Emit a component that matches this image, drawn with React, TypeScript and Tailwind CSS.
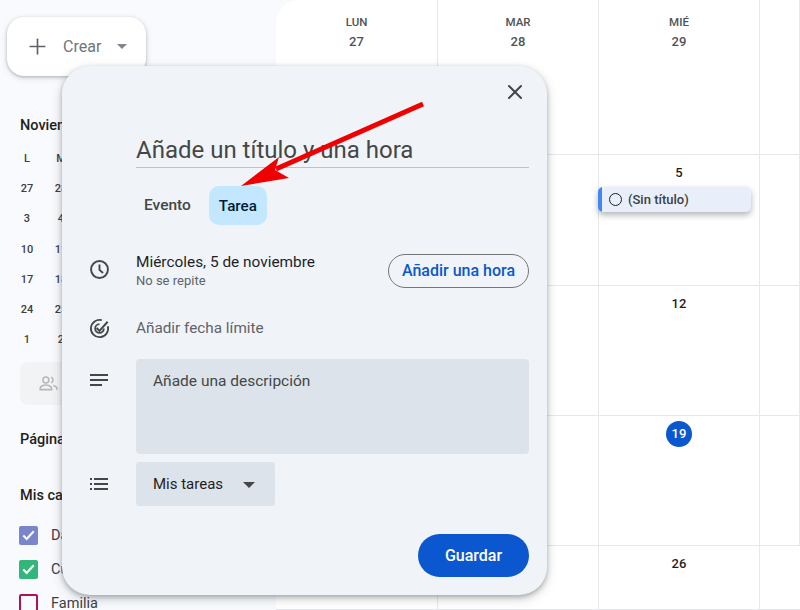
import React from "react";
import { X, Plus } from "lucide-react";

const miniRows = [
  ["27", "28"],
  ["3", "4"],
  ["10", "11"],
  ["17", "18"],
  ["24", "25"],
  ["1", "2"],
];

const Check = () => (
  <svg viewBox="0 0 20 20" className="h-5 w-5" fill="none">
    <path d="M4.5 10.5l3.6 3.6 7.4-8" stroke="#fff" strokeWidth="2.2" />
  </svg>
);

const Sidebar = () => (
  <aside className="flex h-[610px] w-[276px] shrink-0 flex-col overflow-hidden pt-[17px]">
    <div className="ml-[7px] flex h-[59px] w-[139px] shrink-0 items-center rounded-[17px] bg-white pl-[18px] shadow-[0_1px_3px_rgba(60,64,67,0.3),0_2px_6px_rgba(60,64,67,0.15)]">
      <Plus size={25} strokeWidth={1.6} className="text-[#5f6368]" />
      <span className="ml-[13px] text-[16px] text-[#70757a]">Crear</span>
      <span className="ml-[16px] h-0 w-0 border-x-[5px] border-t-[5px] border-x-transparent border-t-[#80868b]" />
    </div>
    <div className="ml-5 mt-[40px] shrink-0 text-[14.5px] font-medium leading-5 text-[#1f1f1f]">Noviembre</div>
    <div className="mt-[15px] ml-[10px] grid w-[68px] shrink-0 grid-cols-2 text-center text-[11px] font-medium leading-[30.3px] text-[#3c4043]">
      <span className="leading-4">L</span>
      <span className="leading-4">M</span>
      <div className="col-span-2 h-[7px]" />
      {miniRows.flat().map((d, i) => (
        <span key={i}>{d}</span>
      ))}
    </div>
    <div className="ml-5 mt-[6px] flex h-[43px] w-[120px] shrink-0 items-center rounded-lg bg-[#f1f3f4] pl-[18px]">
      <svg viewBox="0 0 24 24" className="h-[21px] w-[21px]" fill="none" stroke="#b5b9be" strokeWidth="1.8">
        <circle cx="9" cy="8" r="3.4" />
        <path d="M2.5 19v-1.5c0-2.3 3.6-3.7 6.5-3.7s6.5 1.4 6.5 3.7V19z" />
        <path d="M15 4.8a3.4 3.4 0 010 6.4M17.5 14.2c2.2.6 4 1.7 4 3.3V19" />
      </svg>
    </div>
    <div className="ml-5 mt-[25px] shrink-0 text-[14.5px] font-medium leading-5 text-[#1f1f1f]">Páginas</div>
    <div className="ml-5 mt-[36px] shrink-0 text-[14.5px] font-medium leading-5 text-[#1f1f1f]">Mis calendarios</div>
    <div className="ml-[19px] mt-[20px] flex shrink-0 flex-col gap-[15px]">
      <div className="flex items-center gap-[13px]">
        <span className="flex h-[19px] w-[19px] items-center justify-center rounded-[2px] bg-[#7986cb]"><Check /></span>
        <span className="text-[14.5px] leading-[19px] text-[#3c4043]">Daniel</span>
      </div>
      <div className="flex items-center gap-[13px]">
        <span className="flex h-[19px] w-[19px] items-center justify-center rounded-[2px] bg-[#33b679]"><Check /></span>
        <span className="text-[14.5px] leading-[19px] text-[#3c4043]">Cumpleaños</span>
      </div>
      <div className="flex items-center gap-[13px]">
        <span className="h-[19px] w-[19px] rounded-[2px] border-2 border-[#ad1457]" />
        <span className="text-[14.5px] leading-[19px] text-[#3c4043]">Familia</span>
      </div>
    </div>
  </aside>
);

const Calendar = () => (
  <main className="h-[610px] flex-1 overflow-hidden rounded-tl-[24px] bg-white">
    <div className="grid grid-cols-[162px_161px_161px_40px] grid-rows-[155px_131px_130px_130px_64px]">
      {["LUN|27", "MAR|28", "MIÉ|29", "", "", "", "5", "", "", "", "12", "", "", "", "19", "", "", "", "26", ""].map((c, i) => {
        const [dow, num] = c.includes("|") ? c.split("|") : ["", c];
        return (
          <div key={i} className="relative flex flex-col items-center border-b border-r border-[#e6e8ec] last:border-r-0">
            {dow && (
              <>
                <span className="mt-[14px] text-[11.5px] font-medium leading-4 text-[#4f5357]">{dow}</span>
                <span className="mt-[3px] text-[13px] font-medium leading-[18px] text-[#4f5357]">{num}</span>
              </>
            )}
            {!dow && num === "19" && (
              <span className="mt-[5px] flex h-[26px] w-[26px] items-center justify-center rounded-full bg-[#0b57d0] text-[13px] font-medium text-white">19</span>
            )}
            {!dow && num && num !== "19" && (
              <span className="mt-[9px] text-[13px] font-medium leading-[18px] text-[#1f1f1f]">{num}</span>
            )}
            {num === "5" && (
              <div className="absolute left-[-1px] top-[32px] flex h-[25px] w-[153px] items-center overflow-hidden rounded-[5px] bg-[#e8effa] shadow-[0_3px_6px_rgba(60,64,67,0.4)]">
                <span className="h-full w-[4px] bg-[#4285f4]" />
                <span className="ml-[7px] h-[13px] w-[13px] rounded-full border-[1.5px] border-[#1f1f1f]" />
                <span className="ml-[6px] text-[13px] font-medium text-[#3c4043]">(Sin título)</span>
              </div>
            )}
          </div>
        );
      })}
    </div>
  </main>
);

const Modal = () => (
  <div className="absolute left-[62px] top-[66px] flex h-[529px] w-[485px] flex-col rounded-[28px] bg-[#f0f4f9] pr-[18px] shadow-[0_2px_5px_rgba(60,64,67,0.35),0_4px_12px_rgba(60,64,67,0.2)]">
    <div className="flex justify-end pt-[14px] pr-[2px]">
      <X size={24} strokeWidth={2} className="text-[#444746]" />
    </div>
    <div className="ml-[74px] mt-[30px] border-b border-[#bfc3c7] text-[24px] leading-[33px] text-[#444746]">
      Añade un título y una hora
    </div>
    <div className="ml-[74px] mt-[18px] flex h-[39px]">
      <span className="flex items-center pl-2 pr-[18px] pt-[1px] text-[15.5px] font-medium text-[#444746]">Evento</span>
      <span className="flex items-center rounded-[10px] bg-[#c2e7ff] px-[10px] pt-[1px] text-[15.2px] font-medium text-[#001d35]">Tarea</span>
    </div>
    <div className="mt-[28px] flex h-[36px] items-center">
      <div className="mb-[3px] flex w-[74px] justify-center">
        <svg viewBox="0 0 24 24" className="h-[23px] w-[23px]" fill="none" stroke="#444746" strokeWidth="2">
          <circle cx="12" cy="12" r="8.8" />
          <path d="M12 6.8V12.4l3.7 3.2" />
        </svg>
      </div>
      <div className="flex-1">
        <div className="text-[15.4px] leading-[19px] text-[#1f1f1f]">Miércoles, 5 de noviembre</div>
        <div className="text-[13px] leading-[17px] text-[#5f6368]">No se repite</div>
      </div>
      <span className="flex h-[34px] w-[141px] items-center justify-center rounded-full border border-[#747775] text-[16px] font-medium text-[#0b57d0]">
        Añadir una hora
      </span>
    </div>
    <div className="mt-[21px] flex h-[36px] items-center">
      <div className="flex w-[74px] justify-center">
        <svg viewBox="0 0 24 24" className="h-[23px] w-[23px]" fill="none" stroke="#444746" strokeWidth="1.9">
          <path d="M20.7 9.6A9 9 0 1114.4 3.3" />
          <path d="M16.5 12a4.5 4.5 0 11-4.5-4.5" />
          <path d="M9 11.5l3 3 8.5-9.5" strokeWidth="2.1" />
        </svg>
      </div>
      <span className="text-[15.3px] text-[#5f6368]">Añadir fecha límite</span>
    </div>
    <div className="mt-[13px] flex">
      <div className="flex w-[74px] justify-center pt-[15px]">
        <svg viewBox="0 0 18 14" className="h-[14px] w-[18px]" fill="#444746">
          <rect width="18" height="2" y="0" />
          <rect width="18" height="2" y="5" />
          <rect width="12" height="2" y="10" />
        </svg>
      </div>
      <div className="h-[95px] flex-1 rounded-[4px] bg-[#dde3ea] px-[17px] pt-[12px] text-[15.5px] leading-[20px] text-[#444746]">
        Añade una descripción
      </div>
    </div>
    <div className="mt-[8px] flex">
      <div className="flex w-[74px] items-center justify-center">
        <svg viewBox="0 0 18 12" className="h-[12px] w-[18px]" fill="#444746">
          <rect width="2" height="2" y="0" />
          <rect width="2" height="2" y="5" />
          <rect width="2" height="2" y="10" />
          <rect width="14" height="2" x="4" y="0" />
          <rect width="14" height="2" x="4" y="5" />
          <rect width="14" height="2" x="4" y="10" />
        </svg>
      </div>
      <div className="flex h-[44px] w-[139px] items-center rounded-[4px] bg-[#dde3ea] pl-[17px] pt-[1px] text-[15px] text-[#1f1f1f]">
        Mis tareas
        <span className="ml-[20px] h-0 w-0 border-x-[6px] border-t-[6px] border-x-transparent border-t-[#444746]" />
      </div>
    </div>
    <div className="mt-[28px] flex justify-end">
      <span className="flex h-[43px] w-[111px] items-center justify-center rounded-full bg-[#0b57d0] text-[16px] font-medium text-white">
        Guardar
      </span>
    </div>
  </div>
);

export default function App() {
  return (
    <div className="relative flex h-[610px] w-[800px] overflow-hidden bg-[#f8fafd] font-['Roboto',sans-serif]">
      <Sidebar />
      <Calendar />
      <Modal />
      {/* flecha roja sobre la captura */}
      <svg className="absolute left-[230px] top-[95px]" width="200" height="100" viewBox="0 0 200 100">
        <path d="M193 9L46 74" stroke="#f00000" strokeWidth="5" fill="none" />
        <polygon points="11,91 49,62 45,75 59,83" fill="#f00000" />
      </svg>
    </div>
  );
}
